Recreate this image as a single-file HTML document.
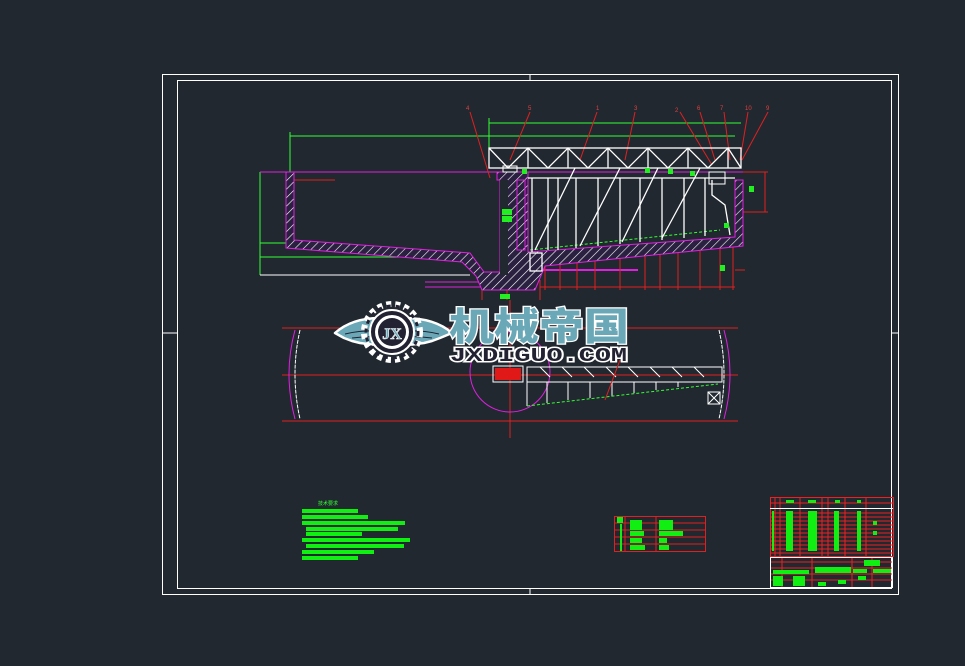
<!DOCTYPE html>
<html><head><meta charset="utf-8"><style>
html,body{margin:0;padding:0;background:#212830;}
svg{display:block;}
</style></head><body>
<svg width="965" height="666" viewBox="0 0 965 666" xmlns="http://www.w3.org/2000/svg" font-family="Liberation Sans, sans-serif">
<defs>
<pattern id="h" width="6" height="6" patternUnits="userSpaceOnUse" patternTransform="rotate(45)">
<rect width="6" height="6" fill="#2a2040"/><line x1="0" y1="0" x2="0" y2="6" stroke="#fff" stroke-width="1.2"/>
</pattern>
</defs>
<rect width="965" height="666" fill="#212830"/>
<!-- frames -->
<rect x="162.5" y="74.5" width="736" height="520" fill="none" stroke="#fff" stroke-width="1"/>
<rect x="177.5" y="80.5" width="714" height="508" fill="none" stroke="#fff" stroke-width="1"/>
<line x1="162" y1="333" x2="177" y2="333" stroke="#fff"/>
<line x1="891" y1="333" x2="898" y2="333" stroke="#fff"/>
<line x1="530" y1="74" x2="530" y2="80" stroke="#fff"/>
<line x1="530" y1="588" x2="530" y2="594" stroke="#fff"/>

<!-- ELEVATION -->
<g stroke-width="1" fill="none">
<line x1="489" y1="123" x2="741" y2="123" stroke="#3f3"/>
<line x1="290" y1="136" x2="735" y2="136" stroke="#3f3"/>
<line x1="489" y1="118" x2="489" y2="150" stroke="#3f3"/>
<line x1="290" y1="132" x2="290" y2="175" stroke="#3f3"/>
<line x1="260" y1="172" x2="260" y2="275" stroke="#3f3"/>
<line x1="260" y1="172" x2="290" y2="172" stroke="#3f3"/>
<line x1="260" y1="243" x2="290" y2="243" stroke="#3f3"/>
<line x1="260" y1="257" x2="470" y2="257" stroke="#3f3"/>
<line x1="530" y1="250" x2="720" y2="230" stroke="#3f3" stroke-dasharray="3,2"/>
<line x1="260" y1="172" x2="750" y2="172" stroke="#e020e0"/>
<line x1="525" y1="270" x2="638" y2="270" stroke="#e020e0" stroke-width="2"/>
<line x1="425" y1="282" x2="490" y2="282" stroke="#e020e0"/>
<line x1="425" y1="287" x2="490" y2="287" stroke="#e020e0"/>
<line x1="260" y1="275" x2="470" y2="275" stroke="#fff"/>
<g stroke="#e02020">
<line x1="470" y1="112" x2="490" y2="178"/><line x1="530" y1="112" x2="510" y2="160"/>
<line x1="597" y1="112" x2="580" y2="160"/><line x1="635" y1="112" x2="625" y2="160"/>
<line x1="680" y1="112" x2="712" y2="165"/><line x1="700" y1="112" x2="715" y2="160"/>
<line x1="724" y1="112" x2="730" y2="160"/><line x1="748" y1="112" x2="740" y2="160"/>
<line x1="768" y1="112" x2="742" y2="160"/>
<line x1="290" y1="180" x2="335" y2="180"/>
<line x1="507" y1="180" x2="507" y2="300"/>
<line x1="743" y1="172" x2="768" y2="172"/><line x1="743" y1="212" x2="768" y2="212"/><line x1="765" y1="172" x2="765" y2="212"/>
<line x1="735" y1="270" x2="745" y2="270"/>
<line x1="540" y1="287" x2="735" y2="287"/>
<line x1="545" y1="260" x2="545" y2="290"/><line x1="560" y1="258" x2="560" y2="290"/><line x1="577" y1="256" x2="577" y2="290"/>
<line x1="595" y1="254" x2="595" y2="290"/><line x1="620" y1="252" x2="620" y2="290"/><line x1="645" y1="250" x2="645" y2="290"/>
<line x1="660" y1="248" x2="660" y2="290"/><line x1="678" y1="246" x2="678" y2="290"/><line x1="700" y1="244" x2="700" y2="290"/>
<line x1="720" y1="242" x2="720" y2="290"/><line x1="733" y1="240" x2="733" y2="290"/>
<line x1="482" y1="280" x2="482" y2="300"/><line x1="540" y1="280" x2="540" y2="300"/>
</g>
<g fill="#e04040" font-size="6">
<text x="466" y="110">4</text><text x="528" y="110">5</text><text x="596" y="110">1</text><text x="634" y="110">3</text>
<text x="675" y="112">2</text><text x="697" y="110">6</text><text x="720" y="110">7</text><text x="745" y="110">10</text><text x="766" y="110">9</text>
</g>
<path d="M286,172 L294,172 L294,240 L470,253 L484,272 L500,272 L500,180 L497,180 L497,172 L528,172 L528,252 L735,237 L735,180 L743,180 L743,246 L545,266 L535,290 L482,290 L476,276 L462,262 L286,248 Z" fill="url(#h)" stroke="#e020e0"/>
<rect x="500" y="180" width="8" height="95" fill="#212830"/>
<rect x="517" y="180" width="8" height="70" fill="url(#h)" stroke="#e020e0"/>
<g stroke="#fff" stroke-width="1.3">
<rect x="489" y="148" width="252" height="20"/>
<path d="M489,148 L508,168 L528,148 L548,168 L568,148 L588,168 L608,148 L628,168 L648,148 L668,168 L688,148 L708,168 L728,148 L741,168"/>
<line x1="528" y1="148" x2="528" y2="168"/><line x1="568" y1="148" x2="568" y2="168"/><line x1="608" y1="148" x2="608" y2="168"/><line x1="648" y1="148" x2="648" y2="168"/><line x1="688" y1="148" x2="688" y2="168"/><line x1="728" y1="148" x2="728" y2="168"/>
<line x1="528" y1="178" x2="735" y2="178"/>
<line x1="532" y1="178" x2="532" y2="252"/><line x1="548" y1="178" x2="548" y2="250"/><line x1="558" y1="178" x2="558" y2="250"/>
<line x1="576" y1="178" x2="576" y2="248"/><line x1="598" y1="178" x2="598" y2="246"/><line x1="620" y1="178" x2="620" y2="244"/>
<line x1="640" y1="178" x2="640" y2="242"/><line x1="662" y1="178" x2="662" y2="240"/><line x1="684" y1="178" x2="684" y2="238"/>
<line x1="705" y1="178" x2="705" y2="236"/>
<line x1="535" y1="250" x2="575" y2="168"/><line x1="580" y1="246" x2="620" y2="168"/><line x1="622" y1="242" x2="658" y2="168"/>
<line x1="662" y1="238" x2="700" y2="168"/>
<rect x="530" y="253" width="12" height="18"/>
<path d="M712,180 L712,195 L725,205 L730,235"/>
</g>
<rect x="503" y="166" width="14" height="6" stroke="#fff"/>
<rect x="709" y="172" width="16" height="12" stroke="#fff"/>
</g>
<g fill="#22ee22">
<rect x="522" y="169" width="5" height="5"/><rect x="645" y="168" width="5" height="5"/><rect x="668" y="169" width="5" height="5"/><rect x="690" y="171" width="5" height="5"/>
<rect x="749" y="186" width="5" height="6"/><rect x="724" y="223" width="5" height="5"/><rect x="720" y="265" width="5" height="6"/>
<rect x="502" y="209" width="10" height="6"/><rect x="502" y="216" width="10" height="6"/><rect x="500" y="294" width="10" height="5"/>
</g>

<!-- PLAN VIEW -->
<g fill="none" stroke-width="1">
<line x1="282" y1="328" x2="738" y2="328" stroke="#e02020"/>
<line x1="282" y1="421" x2="738" y2="421" stroke="#e02020"/>
<line x1="282" y1="375" x2="738" y2="375" stroke="#e02020"/>
<line x1="510" y1="300" x2="510" y2="438" stroke="#e02020"/>
<path d="M295,330 Q283,374 295,419" stroke="#e020e0"/>
<path d="M300,330 Q290,374 300,419" stroke="#fff" stroke-dasharray="4,1"/>
<path d="M724,330 Q736,374 724,419" stroke="#e020e0"/>
<path d="M719,330 Q729,374 719,419" stroke="#fff" stroke-dasharray="4,1"/>
<circle cx="510" cy="372" r="40" stroke="#e020e0"/>
<g stroke="#fff">
<rect x="527" y="367" width="195" height="15"/>
<line x1="527" y1="382" x2="527" y2="406"/><line x1="547" y1="382" x2="547" y2="403"/><line x1="568" y1="382" x2="568" y2="400"/>
<line x1="590" y1="382" x2="590" y2="398"/><line x1="612" y1="382" x2="612" y2="396"/><line x1="634" y1="382" x2="634" y2="393"/>
<line x1="656" y1="382" x2="656" y2="390"/><line x1="678" y1="382" x2="678" y2="387"/>
<path d="M540,367 l10,10 M562,367 l10,10 M584,367 l10,10 M606,367 l10,10 M628,367 l10,10 M650,367 l10,10 M672,367 l10,10 M694,367 l10,10"/>
<rect x="708" y="392" width="12" height="12"/><path d="M708,392 l12,12 M720,392 l-12,12"/>
</g>
<line x1="527" y1="406" x2="718" y2="384" stroke="#3f3" stroke-dasharray="3,2"/>
<line x1="605" y1="400" x2="620" y2="360" stroke="#e02020"/>
<rect x="493" y="366" width="30" height="16" stroke="#fff"/>
</g>
<rect x="495" y="368" width="26" height="12" fill="#e01818"/>

<!-- LOGO -->
<g>
<path d="M335,333 Q352,318 380,318 L392,326 L392,342 Q378,346 368,344 L360,343 L352,341 L344,338 Z" fill="#6aa8b8" stroke="#fff" stroke-width="2.5" stroke-linejoin="round"/>
<path d="M452,333 Q435,318 404,318 L392,326 L392,342 Q406,346 416,344 L424,343 L432,341 L440,338 Z" fill="#6aa8b8" stroke="#fff" stroke-width="2.5" stroke-linejoin="round"/>
<path d="M345,334 Q362,330 382,331 M352,338 Q368,336 382,337 M439,334 Q422,330 402,331 M432,338 Q416,336 402,337" stroke="#223" stroke-width="1" fill="none"/>
<circle cx="392" cy="332" r="28" fill="none" stroke="#fff" stroke-width="6" stroke-dasharray="5,4"/>
<circle cx="392" cy="332" r="26" fill="none" stroke="#223" stroke-width="3" stroke-dasharray="4,5"/>
<circle cx="392" cy="332" r="22" fill="#223" stroke="#fff" stroke-width="2"/>
<circle cx="392" cy="332" r="17" fill="#fff"/>
<circle cx="392" cy="332" r="14" fill="#223"/>
<text x="392" y="339" font-family="Liberation Serif, serif" font-weight="bold" font-size="16" fill="#6aa8b8" stroke="#fff" stroke-width="0.6" text-anchor="middle">JX</text>
<text x="449" y="340" font-family="'Noto Sans CJK SC', sans-serif" font-weight="900" font-size="38" fill="#6aa8b8" stroke="#fff" stroke-width="2.5" paint-order="stroke" textLength="180" lengthAdjust="spacingAndGlyphs">机械帝国</text>
<text x="450" y="361" font-family="Liberation Mono, monospace" font-weight="bold" font-size="19" fill="#223" stroke="#fff" stroke-width="3" paint-order="stroke" textLength="177" lengthAdjust="spacingAndGlyphs">JXDIGUO.COM</text>
</g>

<!-- tech notes -->
<text x="318" y="505" font-size="5" fill="#3f3">技术要求</text>
<g fill="#11ee11">
<rect x="302" y="509" width="56" height="4"/><rect x="302" y="515" width="66" height="4"/><rect x="302" y="521" width="103" height="4"/>
<rect x="306" y="527" width="92" height="4"/><rect x="306" y="532" width="56" height="4"/><rect x="302" y="538" width="108" height="4"/>
<rect x="306" y="544" width="98" height="4"/><rect x="302" y="550" width="72" height="4"/><rect x="302" y="556" width="56" height="4"/>
</g>

<!-- middle table -->
<g stroke="#e02020" fill="none">
<rect x="614.5" y="516.5" width="91" height="35"/>
<line x1="614" y1="523" x2="706" y2="523"/><line x1="614" y1="530" x2="706" y2="530"/><line x1="614" y1="537" x2="706" y2="537"/><line x1="614" y1="544" x2="706" y2="544"/>
<line x1="625" y1="516" x2="625" y2="552"/><line x1="656" y1="516" x2="656" y2="552"/>
</g>
<g fill="#11ee11">
<rect x="617" y="517" width="6" height="6"/><rect x="620" y="524" width="2" height="27"/>
<rect x="630" y="520" width="12" height="10"/><rect x="630" y="531" width="14" height="5"/><rect x="630" y="538" width="12" height="5"/><rect x="630" y="545" width="15" height="5"/>
<rect x="659" y="520" width="14" height="10"/><rect x="659" y="531" width="24" height="5"/><rect x="659" y="538" width="8" height="5"/><rect x="659" y="545" width="10" height="5"/>
</g>

<!-- title block -->
<g stroke="#f02020" fill="none" stroke-width="1">
<rect x="770.5" y="497.5" width="123" height="59"/>
<line x1="770" y1="503" x2="893" y2="503"/>
<line x1="770" y1="513" x2="893" y2="513"/><line x1="770" y1="517" x2="893" y2="517"/><line x1="770" y1="521" x2="893" y2="521"/>
<line x1="770" y1="525" x2="893" y2="525"/><line x1="770" y1="529" x2="893" y2="529"/><line x1="770" y1="533" x2="893" y2="533"/>
<line x1="770" y1="537" x2="893" y2="537"/><line x1="770" y1="541" x2="893" y2="541"/><line x1="770" y1="545" x2="893" y2="545"/>
<line x1="770" y1="549" x2="893" y2="549"/><line x1="770" y1="553" x2="893" y2="553"/>
<line x1="775" y1="497" x2="775" y2="557"/><line x1="780" y1="497" x2="780" y2="557"/><line x1="800" y1="497" x2="800" y2="557"/><line x1="822" y1="497" x2="822" y2="557"/>
<line x1="828" y1="497" x2="828" y2="557"/><line x1="845" y1="497" x2="845" y2="557"/><line x1="866" y1="497" x2="866" y2="557"/>
<line x1="770" y1="562" x2="893" y2="562"/><line x1="770" y1="568" x2="893" y2="568"/><line x1="770" y1="574" x2="893" y2="574"/><line x1="770" y1="580" x2="893" y2="580"/>
<line x1="782" y1="557" x2="782" y2="588"/><line x1="812" y1="557" x2="812" y2="588"/><line x1="852" y1="557" x2="852" y2="588"/><line x1="872" y1="557" x2="872" y2="588"/>
</g>
<line x1="770" y1="508.5" x2="893" y2="508.5" stroke="#fff"/>
<rect x="770.5" y="557.5" width="122" height="30" fill="none" stroke="#fff"/>
<g fill="#11ee11">
<rect x="786" y="500" width="8" height="3"/><rect x="808" y="500" width="8" height="3"/><rect x="835" y="500" width="5" height="3"/><rect x="857" y="500" width="4" height="3"/>
<rect x="786" y="511" width="7" height="40"/><rect x="808" y="511" width="9" height="40"/><rect x="834" y="511" width="5" height="40"/><rect x="857" y="511" width="4" height="40"/>
<rect x="873" y="521" width="4" height="4"/><rect x="873" y="531" width="4" height="4"/><rect x="772" y="511" width="2" height="40"/>
<rect x="864" y="560" width="16" height="6"/><rect x="815" y="567" width="36" height="6"/><rect x="773" y="570" width="36" height="4"/>
<rect x="853" y="569" width="14" height="4"/><rect x="873" y="569" width="18" height="4"/><rect x="773" y="576" width="10" height="10"/><rect x="793" y="576" width="12" height="10"/>
<rect x="818" y="582" width="8" height="4"/><rect x="838" y="580" width="8" height="4"/><rect x="858" y="576" width="8" height="4"/>
</g>
</svg>
</body></html>
